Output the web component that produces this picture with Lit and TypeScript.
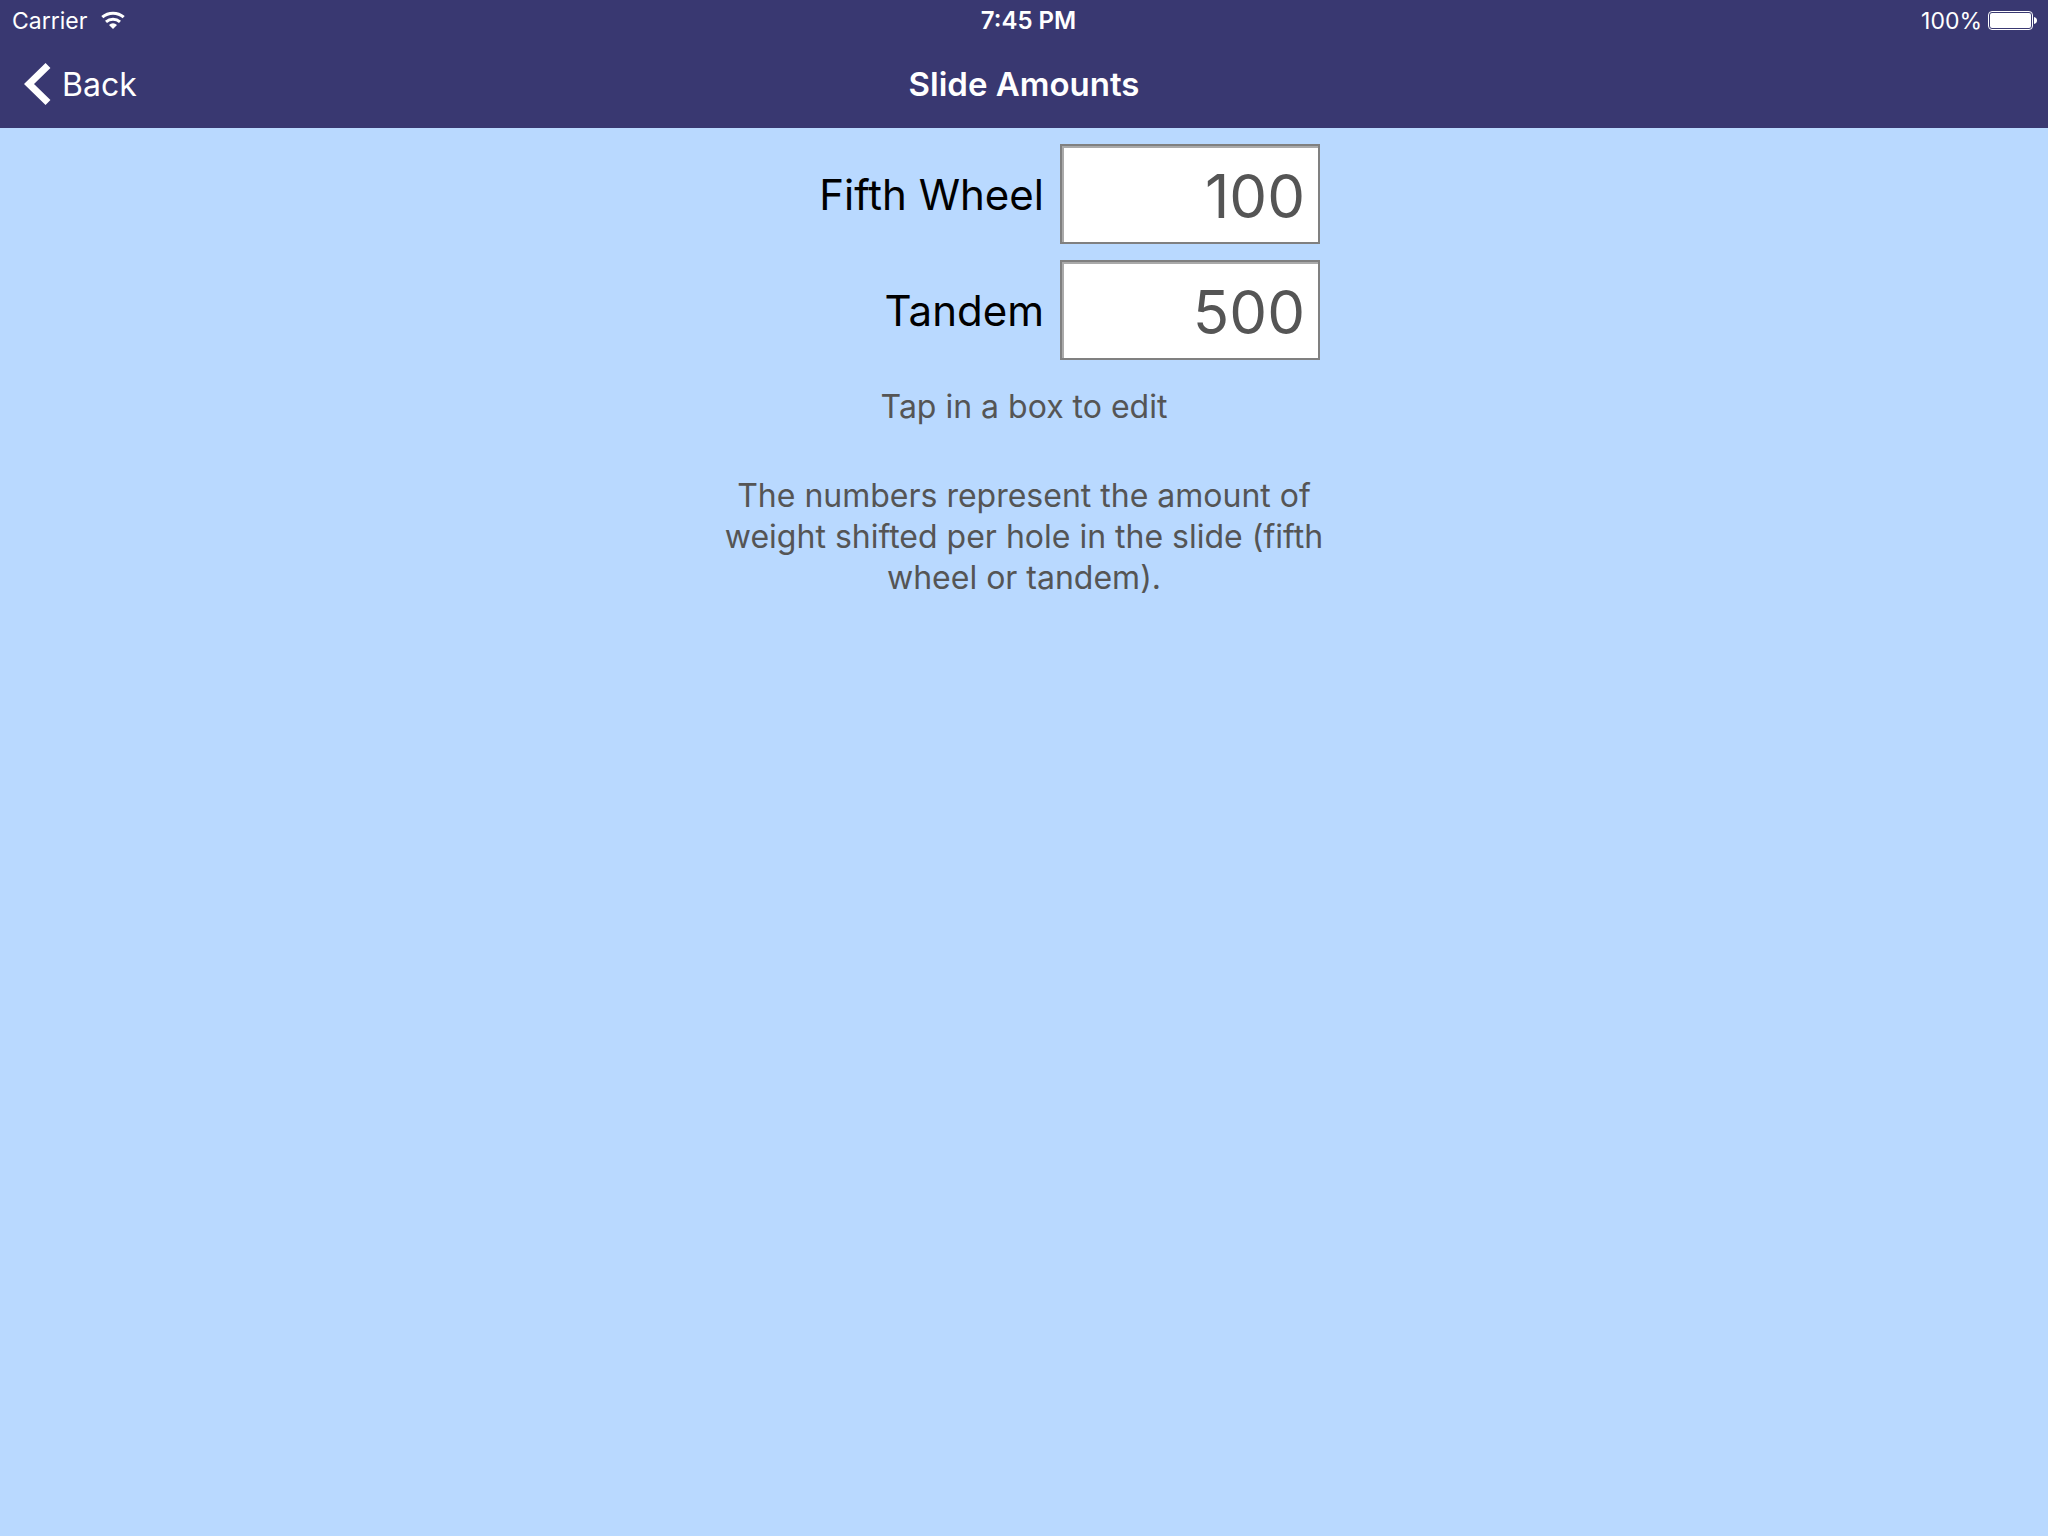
import { LitElement, html, css, svg } from "lit";
import { customElement, state } from "lit/decorators.js";

interface SlideField {
  id: string;
  label: string;
  value: string;
}

const wifiIcon = svg`
  <path d="M1.3 6.2a16.3 16.3 0 0 1 21.4 0" fill="none" stroke="currentColor" stroke-width="3.1"/>
  <path d="M5 10.9a10.6 10.6 0 0 1 14 0" fill="none" stroke="currentColor" stroke-width="3"/>
  <path d="M12 18 8 13.9a5.9 5.9 0 0 1 8 0z" fill="currentColor"/>`;

@customElement("app-root")
export class AppRoot extends LitElement {
  static styles = css`
    :host {
      display: flex;
      flex-direction: column;
      min-height: 100vh;
      background: #b9d9ff;
      color: #555555;
      font-family: Inter, "Liberation Sans", sans-serif;
    }
    .header {
      background: #393871;
      color: #ffffff;
    }
    .status,
    .nav {
      display: grid;
      grid-template-columns: 1fr auto 1fr;
      align-items: center;
    }
    .status {
      box-sizing: border-box;
      height: 40px;
      padding: 1px 11px 0 12px;
      font-size: 23px;
      line-height: 32px;
    }
    .carrier,
    .power {
      display: flex;
      align-items: center;
      gap: 14px;
    }
    .power {
      justify-content: flex-end;
      gap: 6px;
    }
    .time {
      font-size: 24px;
      font-weight: 600;
      padding-left: 8px;
    }
    .wifi {
      width: 24px;
      height: 19px;
    }
    .battery {
      width: 49px;
      height: 19px;
    }
    .nav {
      height: 88px;
      padding: 0 24px;
      line-height: 41px;
    }
    .back {
      display: flex;
      align-items: center;
      justify-self: start;
      gap: 11px;
      padding: 0;
      border: 0;
      background: none;
      color: inherit;
      font: inherit;
      font-size: 32px;
      cursor: pointer;
    }
    .chevron {
      width: 27px;
      height: 42px;
    }
    .title {
      margin: 0;
      font-size: 33px;
      font-weight: 600;
    }
    .content {
      box-sizing: border-box;
      width: 100%;
      max-width: 640px;
      margin: 0 auto;
      padding: 16px 12px;
    }
    .fields {
      display: flex;
      flex-direction: column;
      gap: 16px;
      padding: 0 12px;
    }
    .row {
      display: flex;
      align-items: center;
      justify-content: flex-end;
      gap: 16px;
    }
    .label {
      padding-top: 2px;
      color: #000000;
      font-size: 42px;
      line-height: 52px;
    }
    .input {
      box-sizing: border-box;
      width: 260px;
      height: 100px;
      padding: 4px 13px 0;
      border: 2px solid #808080;
      border-radius: 0;
      outline: none;
      background: #ffffff;
      box-shadow: inset 2px 2px 0 #aaaaaa;
      color: #555555;
      font-family: inherit;
      font-size: 60px;
      text-align: right;
    }
    .hint,
    .note {
      margin: 0;
      font-size: 32px;
      line-height: 41px;
      text-align: center;
    }
    .hint {
      padding: 26px 0 48px;
    }
  `;

  @state() private fields: SlideField[] = [
    { id: "fifth-wheel", label: "Fifth Wheel", value: "100" },
    { id: "tandem", label: "Tandem", value: "500" },
  ];

  private edit(id: string, event: Event) {
    const value = (event.target as HTMLInputElement).value;
    this.fields = this.fields.map((f) => (f.id === id ? { ...f, value } : f));
  }

  render() {
    return html`
      <header class="header">
        <div class="status">
          <div class="carrier">
            <span>Carrier</span>
            <svg class="wifi" viewBox="0 0 24 19" aria-hidden="true">${wifiIcon}</svg>
          </div>
          <span class="time">7:45 PM</span>
          <div class="power">
            <span>100%</span>
            <svg class="battery" viewBox="0 0 49 19" aria-hidden="true">
              <rect x="0.5" y="0.5" width="44" height="18" rx="3.5" fill="none" stroke="currentColor"/>
              <rect x="2" y="2" width="41" height="15" rx="2" fill="currentColor"/>
              <path d="M46 6c2 .4 3 1.7 3 3.5s-1 3.1-3 3.5z" fill="currentColor"/>
            </svg>
          </div>
        </div>
        <nav class="nav">
          <button class="back" type="button">
            <svg class="chevron" viewBox="0 0 27 42" aria-hidden="true">
              <path d="M24 2.5 5 21l19 18.500" fill="none" stroke="currentColor" stroke-width="7"/>
            </svg>
            <span>Back</span>
          </button>
          <h1 class="title">Slide Amounts</h1>
        </nav>
      </header>
      <main class="content">
        <div class="fields">
          ${this.fields.map(
            (f) => html`
              <div class="row">
                <label class="label" for=${f.id}>${f.label}</label>
                <input class="input" id=${f.id} type="text" inputmode="numeric"
                  .value=${f.value} @input=${(e: Event) => this.edit(f.id, e)} />
              </div>
            `
          )}
        </div>
        <p class="hint">Tap in a box to edit</p>
        <p class="note">
          The numbers represent the amount of weight shifted per hole in the slide (fifth wheel or tandem).
        </p>
      </main>
    `;
  }
}
